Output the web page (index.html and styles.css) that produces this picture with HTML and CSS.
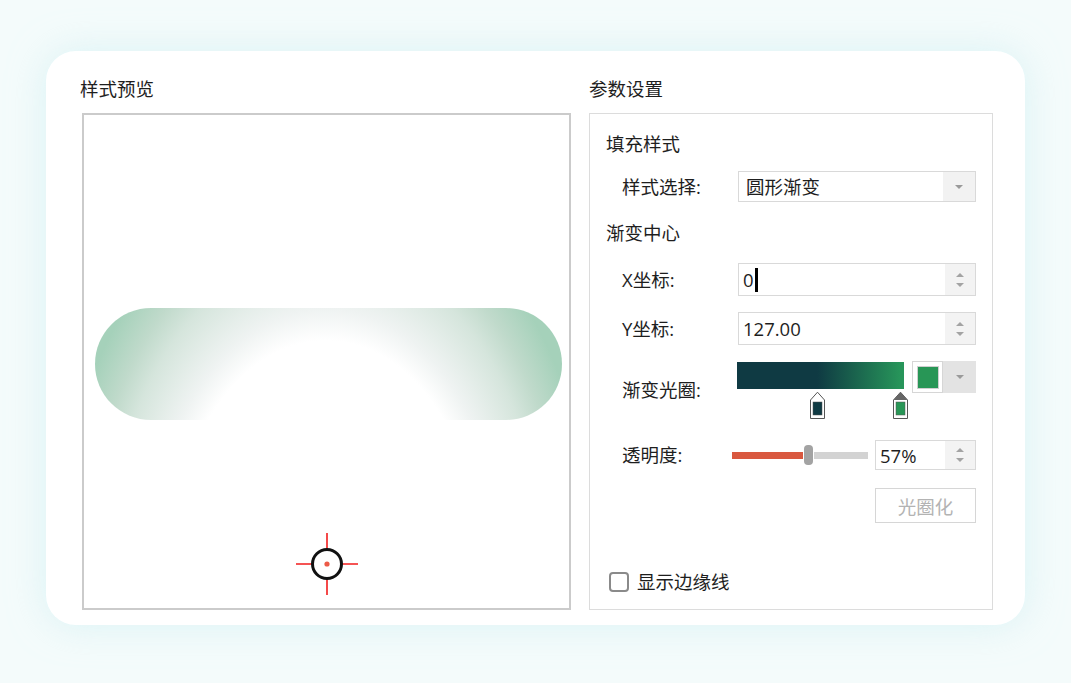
FILE: index.html
```html
<!DOCTYPE html>
<html lang="zh-CN">
<head>
  <meta charset="UTF-8">
  <meta name="viewport" content="width=device-width, initial-scale=1.0">
  <title>渐变填充</title>
  <link rel="stylesheet" href="styles.css">
</head>
<body>
  <div class="Card">

    <section class="Column -preview">
      <h2 class="Column_Title">样式预览</h2>
      <div class="Preview">
        <div class="Preview_Shape"></div>
        <svg class="Preview_Center" width="66" height="66" viewBox="0 0 66 66" aria-hidden="true">
          <path d="M2 33H64M33 2V64" stroke="#f21d1d" stroke-width="1.6"/>
          <circle cx="33" cy="33" r="14.5" fill="#fff" stroke="#111" stroke-width="3"/>
          <circle cx="33" cy="33" r="2.6" fill="#ec5a47"/>
        </svg>
      </div>
    </section>

    <section class="Column -settings">
      <h2 class="Column_Title">参数设置</h2>
      <div class="Panel">

        <h3 class="Panel_Heading">填充样式</h3>
        <div class="Row -style">
          <span class="Row_Label">样式选择:</span>
          <div class="Select">
            <span class="Select_Value">圆形渐变</span>
            <span class="Select_Arrow"></span>
          </div>
        </div>

        <h3 class="Panel_Heading -center">渐变中心</h3>
        <div class="Row -x">
          <span class="Row_Label">X坐标:</span>
          <div class="Spin">
            <span class="Spin_Value">0<i class="Caret"></i></span>
            <span class="Spin_Buttons"><i class="Up"></i><i class="Down"></i></span>
          </div>
        </div>
        <div class="Row -y">
          <span class="Row_Label">Y坐标:</span>
          <div class="Spin">
            <span class="Spin_Value">127.00</span>
            <span class="Spin_Buttons"><i class="Up"></i><i class="Down"></i></span>
          </div>
        </div>

        <div class="Row -gradient">
          <span class="Row_Label">渐变光圈:</span>
          <div class="Gradient">
            <div class="Gradient_Bar"></div>
            <svg class="Gradient_Stop" style="left: 80px" width="15" height="28" viewBox="0 0 15 28" aria-hidden="true">
              <path d="M0.5 27.5V9L7.5 1.2L14.5 9V27.5Z" fill="#fff" stroke="#555"/>
              <rect x="3" y="11" width="9" height="13" fill="#0f3a43" stroke="#555" stroke-width="0.5"/>
            </svg>
            <svg class="Gradient_Stop" style="left: 163px" width="15" height="28" viewBox="0 0 15 28" aria-hidden="true">
              <path d="M0.5 27.5V9L7.5 1.2L14.5 9V27.5Z" fill="#fff" stroke="#555"/>
              <path d="M0.5 9L7.5 1.2L14.5 9Z" fill="#666"/>
              <rect x="3" y="11" width="9" height="13" fill="#289656" stroke="#555" stroke-width="0.5"/>
            </svg>
          </div>
          <div class="ColorButton">
            <span class="ColorButton_Swatch"><i></i></span>
            <span class="Select_Arrow -dark"></span>
          </div>
        </div>

        <div class="Row -alpha">
          <span class="Row_Label">透明度:</span>
          <div class="Slider">
            <span class="Slider_Fill"></span>
            <span class="Slider_Thumb"></span>
            <span class="Slider_Rest"></span>
          </div>
          <div class="Spin -small">
            <span class="Spin_Value">57%</span>
            <span class="Spin_Buttons"><i class="Up"></i><i class="Down"></i></span>
          </div>
        </div>

        <div class="Row -action">
          <button class="Button" type="button" disabled>光圈化</button>
        </div>

        <label class="Check">
          <span class="Check_Box"></span>
          显示边缘线
        </label>

      </div>
    </section>

  </div>
</body>
</html>
```

FILE: styles.css
```css
html,
body {
  margin: 0;
  height: 100%;
}

body {
  background-color: #f4fbfb;
  font-family: "Open Sans", "Noto Sans CJK SC", sans-serif;
  color: #1e1e1e;
}

.Card {
  display: grid;
  grid-template-columns: 491px 404px;
  gap: 18px;
  box-sizing: border-box;
  width: 979px;
  height: 574px;
  margin: 51px 0 0 46px;
  padding: 26px 32px 15px 34px;
  background-color: #fff;
  border-radius: 30px;
  box-shadow: 0 0 36px rgba(196, 236, 240, 0.55);
}

.Column {
  display: flex;
  flex-direction: column;
}

.Column_Title {
  margin: 0 0 12px;
  font-size: 18.5px;
  font-weight: 400;
  line-height: 24px;
}

/* 左側のプレビュー */
.Preview {
  position: relative;
  box-sizing: border-box;
  width: 489px;
  height: 497px;
  margin-left: 2px;
  border: 2px solid #cbcbcb;
  overflow: hidden;
}

.Preview_Shape {
  width: 467px;
  height: 112px;
  margin: 193px 0 0 11px;
  border-radius: 56px;
  background: radial-gradient(ellipse 270px 392px at 231px 256px,
    #fff 0%, #fff 57%, #eff3f2 65%, #d5e5dc 80%, #c0dacb 88%, #a5d1ba 99%);
}

/* グラデーション中心のマーカー */
.Preview_Center {
  position: absolute;
  left: 210px;
  top: 416px;
}

/* 右側の設定パネル */
.Panel {
  display: flex;
  flex-direction: column;
  box-sizing: border-box;
  height: 497px;
  padding: 0 16px 15px 16px;
  border: 1px solid #dcdcdc;
  font-size: 18.5px;
}

.Panel_Heading {
  margin: 18px 0 0;
  font-size: 18.5px;
  font-weight: 400;
  line-height: 24px;
}
.Panel_Heading.-center {
  margin-top: 19px;
}

.Row {
  display: flex;
  align-items: center;
  padding-left: 16px;
}
.Row.-style    { margin-top: 15px; }
.Row.-x        { margin-top: 18px; }
.Row.-y        { margin-top: 16px; }
.Row.-gradient { margin-top: 16px; height: 58px; }
.Row.-alpha    { margin-top: 21px; }
.Row.-action   { margin-top: 18px; justify-content: flex-end; }

.Row_Label {
  width: 116px;
  flex-shrink: 0;
  line-height: 24px;
}
.Row.-alpha .Row_Label {
  width: 110px;
}

/* セレクトボックス */
.Select {
  display: flex;
  box-sizing: border-box;
  width: 238px;
  height: 31px;
  border: 1px solid #d9d9d9;
}
.Select_Value {
  flex: 1;
  padding-left: 7px;
  line-height: 29px;
}
.Select_Arrow {
  position: relative;
  width: 32px;
  background-color: #f2f2f2;
}
.Select_Arrow::before {
  content: "";
  position: absolute;
  left: 50%;
  top: 50%;
  margin: -2px 0 0 -4px;
  border-style: solid;
  border-width: 4px 4px 0 4px;
  border-color: #9a9a9a transparent transparent transparent;
}
.Select_Arrow.-dark {
  width: 33px;
  background-color: #e3e3e3;
}

/* 数値入力 */
.Spin {
  display: flex;
  box-sizing: border-box;
  width: 238px;
  height: 33px;
  border: 1px solid #d9d9d9;
}
.Spin.-small {
  width: 101px;
  height: 30px;
  margin-left: 7px;
}
.Spin_Value {
  display: flex;
  align-items: center;
  flex: 1;
  padding-left: 4px;
  font-size: 18.5px;
}
.Caret {
  display: inline-block;
  width: 3px;
  height: 24px;
  margin-left: 1px;
  background-color: #000;
}
.Spin_Buttons {
  display: flex;
  flex-direction: column;
  justify-content: center;
  align-items: center;
  gap: 6px;
  width: 30px;
  background-color: #f3f3f3;
}
.Spin_Buttons .Up,
.Spin_Buttons .Down {
  display: block;
  border-style: solid;
  border-color: transparent;
}
.Spin_Buttons .Up {
  border-width: 0 4px 4px 4px;
  border-bottom-color: #a3a3a3;
}
.Spin_Buttons .Down {
  border-width: 4px 4px 0 4px;
  border-top-color: #a3a3a3;
}

/* グラデーションバー */
.Gradient {
  position: relative;
  align-self: stretch;
  width: 167px;
  margin-left: -1px;
}
.Gradient_Bar {
  height: 27px;
  margin-top: 1px;
  background: linear-gradient(90deg, #0f3a43 48%, #27955a 98%);
}
.Gradient_Stop {
  position: absolute;
  top: 30px;
  margin-left: -7px;
}

.ColorButton {
  display: flex;
  align-self: flex-start;
  height: 32px;
  margin-left: 8px;
}
.ColorButton_Swatch {
  display: flex;
  align-items: center;
  justify-content: center;
  box-sizing: border-box;
  width: 31px;
  border: 1px solid #d6d6d6;
  background-color: #fff;
}
.ColorButton_Swatch i {
  display: block;
  width: 20px;
  height: 21px;
  background-color: #289656;
  outline: 1px solid #cfcfcf;
}

/* スライダー */
.Slider {
  display: flex;
  align-items: center;
  width: 136px;
  height: 30px;
}
.Slider_Fill {
  width: 71px;
  height: 7px;
  background-color: #d9583f;
}
.Slider_Thumb {
  width: 9px;
  height: 20px;
  margin: 0 1px;
  border-radius: 4px;
  background-color: #a3a3a3;
}
.Slider_Rest {
  flex: 1;
  height: 7px;
  background-color: #d3d3d3;
}

.Button {
  box-sizing: border-box;
  width: 101px;
  height: 35px;
  padding: 0;
  border: 1px solid #d6d6d6;
  background-color: #fff;
  color: #b3b3b3;
  font: inherit;
  font-size: 18.5px;
}

/* チェックボックス */
.Check {
  display: flex;
  align-items: center;
  gap: 8px;
  margin-top: auto;
  margin-left: 3px;
  line-height: 24px;
}
.Check_Box {
  box-sizing: border-box;
  width: 20px;
  height: 20px;
  border: 2px solid #8a8a8a;
  border-radius: 4px;
}
```
